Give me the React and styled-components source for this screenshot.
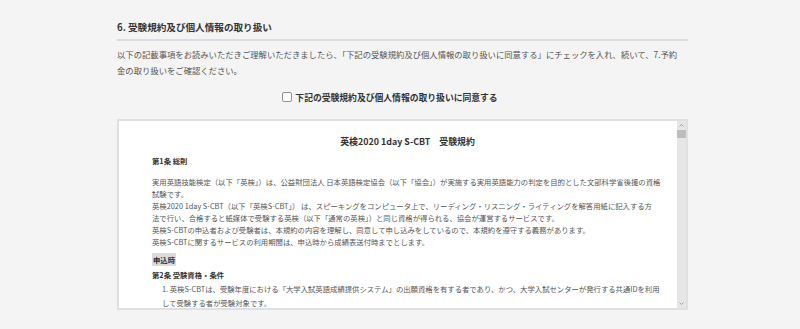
import React from "react";
import styled, { createGlobalStyle } from "styled-components";

const GlobalStyle = createGlobalStyle`
  html, body {
    margin: 0;
    padding: 0;
    background: #f4f4f4;
  }
  body {
    font-family: "Noto Sans CJK JP", "Noto Sans", sans-serif;
    color: #333;
  }
  * { box-sizing: border-box; }
`;

const Section = styled.section`
  width: 571px;
  margin-left: 117px;
  padding-top: 19px;
`;

const Heading = styled.h2`
  margin: 0;
  font-size: 9.6px;
  font-weight: 700;
  line-height: 16px;
  color: #333;
  padding-bottom: 4px;
  border-bottom: 2px solid #dcdde2;
`;

const Lead = styled.p`
  margin: 5px 0 0;
  font-size: 8.33px;
  line-height: 16px;
  color: #555;
`;

const AgreeRow = styled.label`
  display: flex;
  justify-content: center;
  align-items: center;
  gap: 3px;
  margin-top: 11px;
  padding-right: 25px;
  height: 16px;
  font-size: 8.8px;
  font-weight: 700;
  color: #333;
  cursor: pointer;
`;

const CheckBox = styled.span`
  display: inline-block;
  width: 10px;
  height: 10px;
  border: 1px solid #8f8f8f;
  border-radius: 2px;
  background: #fff;
`;

const TermsBox = styled.div`
  margin-top: 14px;
  height: 191px;
  display: flex;
  background: #fff;
  border: 2px solid #e0e0e0;
`;

const TermsContent = styled.div`
  flex: 1;
  overflow: hidden;
  padding: 14px 14px 0 33px;
  color: #444;
`;

const Title = styled.h3`
  margin: 0;
  text-align: center;
  font-size: 8.9px;
  line-height: 14px;
  font-weight: 700;
  color: #333;
`;

const Article = styled.h4`
  margin: ${(p) => p.$top || 0}px 0 0;
  font-size: 7.35px;
  line-height: 14px;
  font-weight: 700;
  color: #333;
`;

const Body = styled.p`
  margin: ${(p) => p.$top || 0}px 0 0;
  font-size: 7.35px;
  line-height: 12px;
  color: #555;
`;

const Marker = styled.div`
  margin-top: 5px;
  font-size: 7.35px;
  line-height: 14px;
  font-weight: 700;
  color: #333;
  span {
    background: #dcdcdc;
    padding: 1px 1px;
  }
`;

const List = styled.ol`
  margin: 0;
  padding: 0 0 0 10px;
  list-style: none;
`;

const Item = styled.li`
  font-size: 7.35px;
  line-height: 14px;
  color: #555;
`;

const Scrollbar = styled.div`
  width: 9px;
  display: flex;
  flex-direction: column;
  background: #e6e6e6;
`;

const ArrowButton = styled.div`
  height: 9px;
  display: flex;
  align-items: center;
  justify-content: center;
`;

const Thumb = styled.div`
  height: 8px;
  background: #bdbdbd;
`;

const Track = styled.div`
  flex: 1;
`;

const Chevron = ({ down }) => (
  <svg width="5" height="3" viewBox="0 0 5 3">
    <path
      d={down ? "M0.5 0.5 L2.5 2.5 L4.5 0.5" : "M0.5 2.5 L2.5 0.5 L4.5 2.5"}
      fill="none"
      stroke="#a3a3a3"
      strokeWidth="1"
    />
  </svg>
);

export default function App() {
  return (
    <>
      <GlobalStyle />
      <Section>
        <Heading>6. 受験規約及び個人情報の取り扱い</Heading>
        <Lead>
          以下の記載事項をお読みいただきご理解いただきましたら、「下記の受験規約及び個人情報の取り扱いに同意する」にチェックを入れ、続いて、7.予約
          <br />
          金の取り扱いをご確認ください。
        </Lead>
        <AgreeRow>
          <CheckBox />
          下記の受験規約及び個人情報の取り扱いに同意する
        </AgreeRow>
        <TermsBox>
          <TermsContent>
            <Title>英検2020 1day S-CBT　受験規約</Title>
            <Article $top={5}>第1条 総則</Article>
            <Body $top={8}>
              実用英語技能検定（以下「英検」）は、公益財団法人 日本英語検定協会（以下「協会」）が実施する実用英語能力の判定を目的とした文部科学省後援の資格
              <br />
              試験です。
              <br />
              英検2020 1day S-CBT（以下「英検S-CBT」） は、スピーキングをコンピュータ上で、リーディング・リスニング・ライティングを解答用紙に記入する方
              <br />
              法で行い、合格すると紙媒体で受験する英検（以下「通常の英検」）と同じ資格が得られる、協会が運営するサービスです。
              <br />
              英検S-CBTの申込者および受験者は、本規約の内容を理解し、同意して申し込みをしているので、本規約を遵守する義務があります。
              <br />
              英検S-CBTに関するサービスの利用期間は、申込時から成績表送付時までとします。
            </Body>
            <Marker>
              <span>申込時</span>
            </Marker>
            <Article $top={1}>第2条 受験資格・条件</Article>
            <List>
              <Item>
                1. 英検S-CBTは、受験年度における「大学入試英語成績提供システム」の出願資格を有する者であり、かつ、大学入試センターが発行する共通IDを利用
                <br />
                して受験する者が受験対象です。
              </Item>
              <Item>
                2. 同一の受験者が、同一の試験日に同一級を重複して申し込むことはできません。また、受験者本人以外の受験は認められません。
              </Item>
            </List>
          </TermsContent>
          <Scrollbar>
            <ArrowButton>
              <Chevron />
            </ArrowButton>
            <Thumb />
            <Track />
            <ArrowButton>
              <Chevron down />
            </ArrowButton>
          </Scrollbar>
        </TermsBox>
      </Section>
    </>
  );
}
